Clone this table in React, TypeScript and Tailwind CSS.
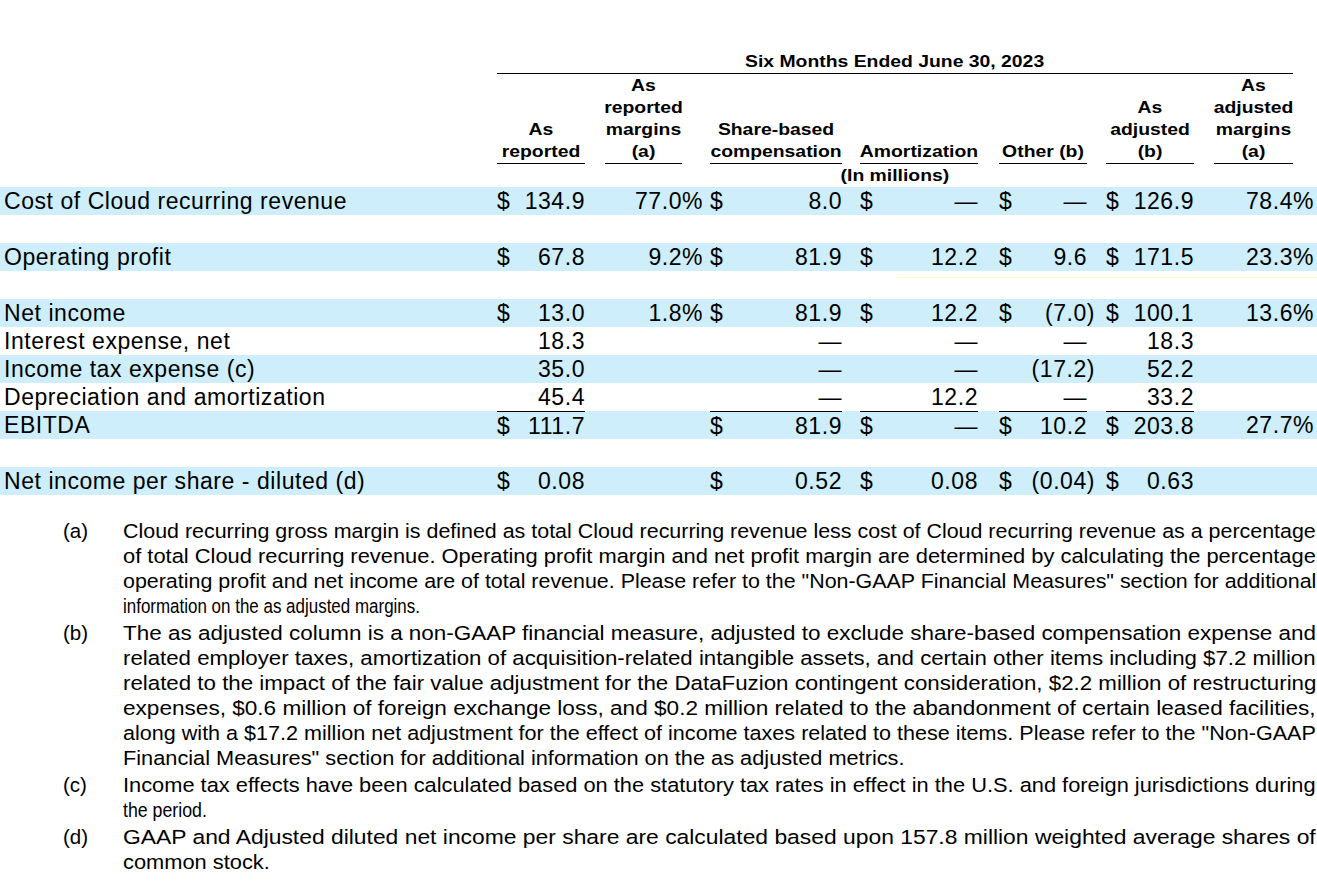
import { useLayoutEffect, useRef, useState } from "react";

type Cell = [string, string];

type Row = {
  label?: string;
  band?: boolean;
  total?: boolean;
  blank?: boolean;
  mark?: boolean;
  cells?: Cell[];
};

// column boxes measured off the underlines
const cols = [
  "ml-0 w-[88px]",
  "ml-[20px] w-[77px]",
  "ml-[28px] w-[132px]",
  "ml-[18px] w-[118px]",
  "ml-[21px] w-[88px]",
  "ml-[19px] w-[88px]",
  "ml-[20px] w-[79px]",
];

const heads = [
  ["As", "reported"],
  ["As", "reported", "margins", "(a)"],
  ["Share-based", "compensation"],
  ["Amortization"],
  ["Other (b)"],
  ["As", "adjusted", "(b)"],
  ["As", "adjusted", "margins", "(a)"],
];

const rows: Row[] = [
  {
    label: "Cost of Cloud recurring revenue",
    band: true,
    cells: [["$", "134.9"], ["", "77.0%"], ["$", "8.0"], ["$", "—"], ["$", "—"], ["$", "126.9"], ["", "78.4%"]],
  },
  { blank: true },
  {
    label: "Operating profit",
    band: true,
    cells: [["$", "67.8"], ["", "9.2%"], ["$", "81.9"], ["$", "12.2"], ["$", "9.6"], ["$", "171.5"], ["", "23.3%"]],
  },
  { blank: true, mark: true },
  {
    label: "Net income",
    band: true,
    cells: [["$", "13.0"], ["", "1.8%"], ["$", "81.9"], ["$", "12.2"], ["$", "(7.0)"], ["$", "100.1"], ["", "13.6%"]],
  },
  {
    label: "Interest expense, net",
    cells: [["", "18.3"], ["", ""], ["", "—"], ["", "—"], ["", "—"], ["", "18.3"], ["", ""]],
  },
  {
    label: "Income tax expense (c)",
    band: true,
    cells: [["", "35.0"], ["", ""], ["", "—"], ["", "—"], ["", "(17.2)"], ["", "52.2"], ["", ""]],
  },
  {
    label: "Depreciation and amortization",
    cells: [["", "45.4"], ["", ""], ["", "—"], ["", "12.2"], ["", "—"], ["", "33.2"], ["", ""]],
  },
  {
    label: "EBITDA",
    band: true,
    total: true,
    cells: [["$", "111.7"], ["", ""], ["$", "81.9"], ["$", "—"], ["$", "10.2"], ["$", "203.8"], ["", "27.7%"]],
  },
  { blank: true },
  {
    label: "Net income per share - diluted (d)",
    band: true,
    cells: [["$", "0.08"], ["", ""], ["$", "0.52"], ["$", "0.08"], ["$", "(0.04)"], ["$", "0.63"], ["", ""]],
  },
];

// each line with the width it takes in the source
const notes: { k: string; lines: [string, number][] }[] = [
  {
    k: "(a)",
    lines: [
      ["Cloud recurring gross margin is defined as total Cloud recurring revenue less cost of Cloud recurring revenue as a percentage", 1193],
      ["of total Cloud recurring revenue. Operating profit margin and net profit margin are determined by calculating the percentage", 1193],
      ['operating profit and net income are of total revenue. Please refer to the "Non-GAAP Financial Measures" section for additional', 1193],
      ["information on the as adjusted margins.", 297],
    ],
  },
  {
    k: "(b)",
    lines: [
      ["The as adjusted column is a non-GAAP financial measure, adjusted to exclude share-based compensation expense and", 1193],
      ["related employer taxes, amortization of acquisition-related intangible assets, and certain other items including $7.2 million", 1193],
      ["related to the impact of the fair value adjustment for the DataFuzion contingent consideration, $2.2 million of restructuring", 1193],
      ["expenses, $0.6 million of foreign exchange loss, and $0.2 million related to the abandonment of certain leased facilities,", 1193],
      ['along with a $17.2 million net adjustment for the effect of income taxes related to these items. Please refer to the "Non-GAAP', 1193],
      ['Financial Measures" section for additional information on the as adjusted metrics.', 782],
    ],
  },
  {
    k: "(c)",
    lines: [
      ["Income tax effects have been calculated based on the statutory tax rates in effect in the U.S. and foreign jurisdictions during", 1193],
      ["the period.", 84],
    ],
  },
  {
    k: "(d)",
    lines: [
      ["GAAP and Adjusted diluted net income per share are calculated based upon 157.8 million weighted average shares of", 1193],
      ["common stock.", 147],
    ],
  },
];

// ")" and "%" hang past the column edge
const hang = (v: string) => (v.endsWith(")") ? "-mr-[8px]" : v.endsWith("%") ? "-mr-[21px]" : "");

const Header = () => (
  <>
    <div className="ml-[497px] w-[796px] border-b border-black text-center text-[16px] font-bold leading-[22px]">
      <span className="inline-block scale-x-[1.21] whitespace-nowrap">Six Months Ended June 30, 2023</span>
    </div>
    <div className="mt-[1px] flex">
      <div className="w-[497px] shrink-0" />
      {heads.map((h, i) => (
        <div
          key={i}
          className={`${cols[i]} flex shrink-0 flex-col justify-end border-b border-black text-center text-[16px] font-bold leading-[22px]`}
        >
          <span className="inline-block scale-x-[1.21] whitespace-nowrap">
            {h.map((t, j) => (
              <span key={j} className="block">
                {t}
              </span>
            ))}
          </span>
        </div>
      ))}
    </div>
    <div className="ml-[497px] w-[796px] text-center text-[16px] font-bold leading-[23px]">
      <span className="inline-block scale-x-[1.21] whitespace-nowrap">(In millions)</span>
    </div>
  </>
);

const TableRow = ({ row }: { row: Row }) => {
  if (row.blank)
    return (
      <div className="h-[28px]">
        {row.mark && (
          <div className="ml-[897px] pt-[6px]">
            <div className="h-px bg-[#f4ffc4]" />
          </div>
        )}
      </div>
    );
  return (
    <div className={`flex h-[28px] text-[23px] leading-[28px] tracking-[0.55px] ${row.band ? "bg-[#cdeefa]" : ""}`}>
      <div className="w-[497px] shrink-0 whitespace-nowrap pl-[4px]">{row.label}</div>
      {row.cells!.map((c, i) => (
        <div
          key={i}
          className={`${cols[i]} flex shrink-0 justify-between whitespace-nowrap ${
            row.total && c[1] && i !== 1 && i !== 6 ? "border-t border-black" : ""
          }`}
        >
          <span>{c[0]}</span>
          <span className={hang(c[1])}>{c[1]}</span>
        </div>
      ))}
    </div>
  );
};

// the source PDF stretches every line to its own width
const FitLine = ({ text, width }: { text: string; width: number }) => {
  const ref = useRef<HTMLSpanElement>(null);
  const [s, setS] = useState(1);
  useLayoutEffect(() => {
    const fit = () => ref.current && setS(width / ref.current.offsetWidth);
    fit();
    document.fonts?.ready.then(fit);
  }, [width]);
  return (
    <div className="whitespace-nowrap">
      <span ref={ref} className="inline-block origin-left" style={{ transform: `scaleX(${s})` }}>
        {text}
      </span>
    </div>
  );
};

const Footnotes = () => (
  <div className="mt-[23px] text-[20.5px] leading-[25px]">
    {notes.map((n, i) => (
      <div key={n.k} className={`flex ${i ? "mt-[2px]" : ""}`}>
        <div className="ml-[63px] w-[60px] shrink-0">{n.k}</div>
        <div className="w-[1193px] shrink-0">
          {n.lines.map(([l, w], j) => (
            <FitLine key={j} text={l} width={w} />
          ))}
        </div>
      </div>
    ))}
  </div>
);

export default function App() {
  return (
    <div className="min-h-screen w-full overflow-hidden bg-white pt-[51px] font-['Liberation_Sans',Arial,sans-serif] text-black">
      <Header />
      <div>
        {rows.map((r, i) => (
          <TableRow key={i} row={r} />
        ))}
      </div>
      <Footnotes />
    </div>
  );
}
